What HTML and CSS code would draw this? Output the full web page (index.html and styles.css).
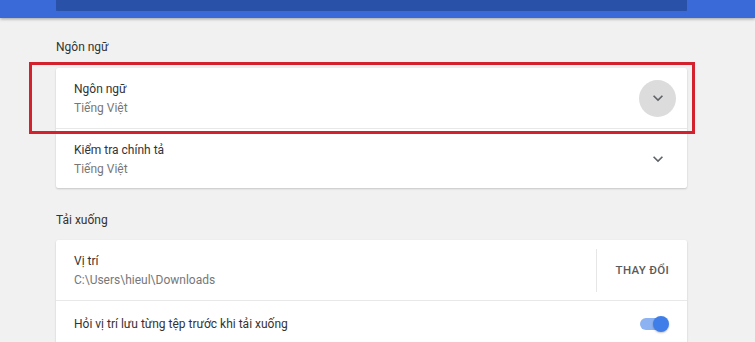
FILE: index.html
```html
<!DOCTYPE html>
<html lang="vi">
<head>
<meta charset="utf-8">
<link rel="stylesheet" href="styles.css">
</head>
<body>
<header class="topbar"><div class="topbar-inner"></div></header>
<main class="page">
  <h2 class="section-title first">Ngôn ngữ</h2>
  <section class="card">
    <div class="row">
      <div class="texts">
        <div class="label">Ngôn ngữ</div>
        <div class="sub">Tiếng Việt</div>
      </div>
      <div class="icon-btn active">
        <svg viewBox="0 0 24 24" width="20" height="20"><path d="M16.59 8.59L12 13.17 7.41 8.59 6 10l6 6 6-6z" fill="#5f6368"/></svg>
      </div>
      <div class="highlight"></div>
    </div>
    <div class="row divided">
      <div class="texts">
        <div class="label">Kiểm tra chính tả</div>
        <div class="sub">Tiếng Việt</div>
      </div>
      <div class="icon-btn">
        <svg viewBox="0 0 24 24" width="20" height="20"><path d="M16.59 8.59L12 13.17 7.41 8.59 6 10l6 6 6-6z" fill="#5f6368"/></svg>
      </div>
    </div>
  </section>

  <h2 class="section-title">Tải xuống</h2>
  <section class="card">
    <div class="row">
      <div class="texts">
        <div class="label">Vị trí</div>
        <div class="sub">C:\Users\hieul\Downloads</div>
      </div>
      <div class="sep"></div>
      <div class="btn-text">THAY ĐỔI</div>
    </div>
    <div class="row divided short">
      <div class="texts single">
        <div class="label">Hỏi vị trí lưu từng tệp trước khi tải xuống</div>
      </div>
      <div class="toggle"><span class="knob"></span></div>
    </div>
  </section>
</main>
</body>
</html>
```
FILE: styles.css
```css
* { box-sizing: border-box; }
html, body { margin: 0; padding: 0; }
body {
  background: #f1f1f1;
  font-family: Roboto, "Noto Sans", "Liberation Sans", sans-serif;
  font-size: 12px;
  color: #333;
  width: 755px;
  height: 342px;
  overflow: hidden;
}
.topbar {
  height: 18px;
  background: #3a6ad8;
  box-shadow: 0 1px 3px rgba(0,0,0,0.35);
  position: relative;
  z-index: 2;
}
.topbar-inner {
  margin-left: 56px;
  width: 631px;
  height: 11px;
  background: #2a51a8;
  border-radius: 0 0 1px 1px;
}
.page {
  margin-left: 56px;
  width: 631px;
}
.section-title {
  margin: 0;
  font-size: 12px;
  font-weight: 400;
  color: #333;
  line-height: 20px;
  padding: 22px 0 10px;
}
.section-title.first { padding: 19px 0 11px; }
.card {
  background: #fff;
  border-radius: 2px;
  box-shadow: 0 1px 2px rgba(0,0,0,0.18), 0 0 1px rgba(0,0,0,0.06);
}
.row {
  position: relative;
  height: 60px;
  display: flex;
  align-items: center;
  padding: 0 18px 0 18px;
}
.row.divided { border-top: 1px solid #e8e8e8; }
.row.short { height: 46px; }
.texts { flex: 1; display: flex; flex-direction: column; padding-top: 2px; }
.texts.single { padding-top: 1px; }
.label { line-height: 19px; color: #333; }
.sub { line-height: 19px; color: #777; }
.icon-btn {
  width: 37px;
  height: 37px;
  border-radius: 50%;
  display: flex;
  align-items: center;
  justify-content: center;
  margin-right: -7px;
}
.icon-btn.active { background: #dcdcdc; }
.icon-btn svg { display: block; }
.highlight {
  position: absolute;
  left: -27px;
  top: -6px;
  width: 666px;
  height: 72px;
  border: 3px solid #d3212d;
  pointer-events: none;
}
.sep {
  width: 1px;
  height: 43px;
  background: #e6e6e6;
  margin-right: 19px;
}
.btn-text {
  font-size: 11.5px;
  font-weight: 500;
  color: #5a5a5a;
  letter-spacing: 0.3px;
}
.toggle {
  position: relative;
  width: 27px;
  height: 12px;
  border-radius: 6px;
  background: #8db2f2;
  margin-right: 2px;
}
.knob {
  position: absolute;
  right: -2px;
  top: -2px;
  width: 16px;
  height: 16px;
  border-radius: 50%;
  background: #3f7ee8;
  box-shadow: 0 1px 2px rgba(0,0,0,0.25);
}
```
